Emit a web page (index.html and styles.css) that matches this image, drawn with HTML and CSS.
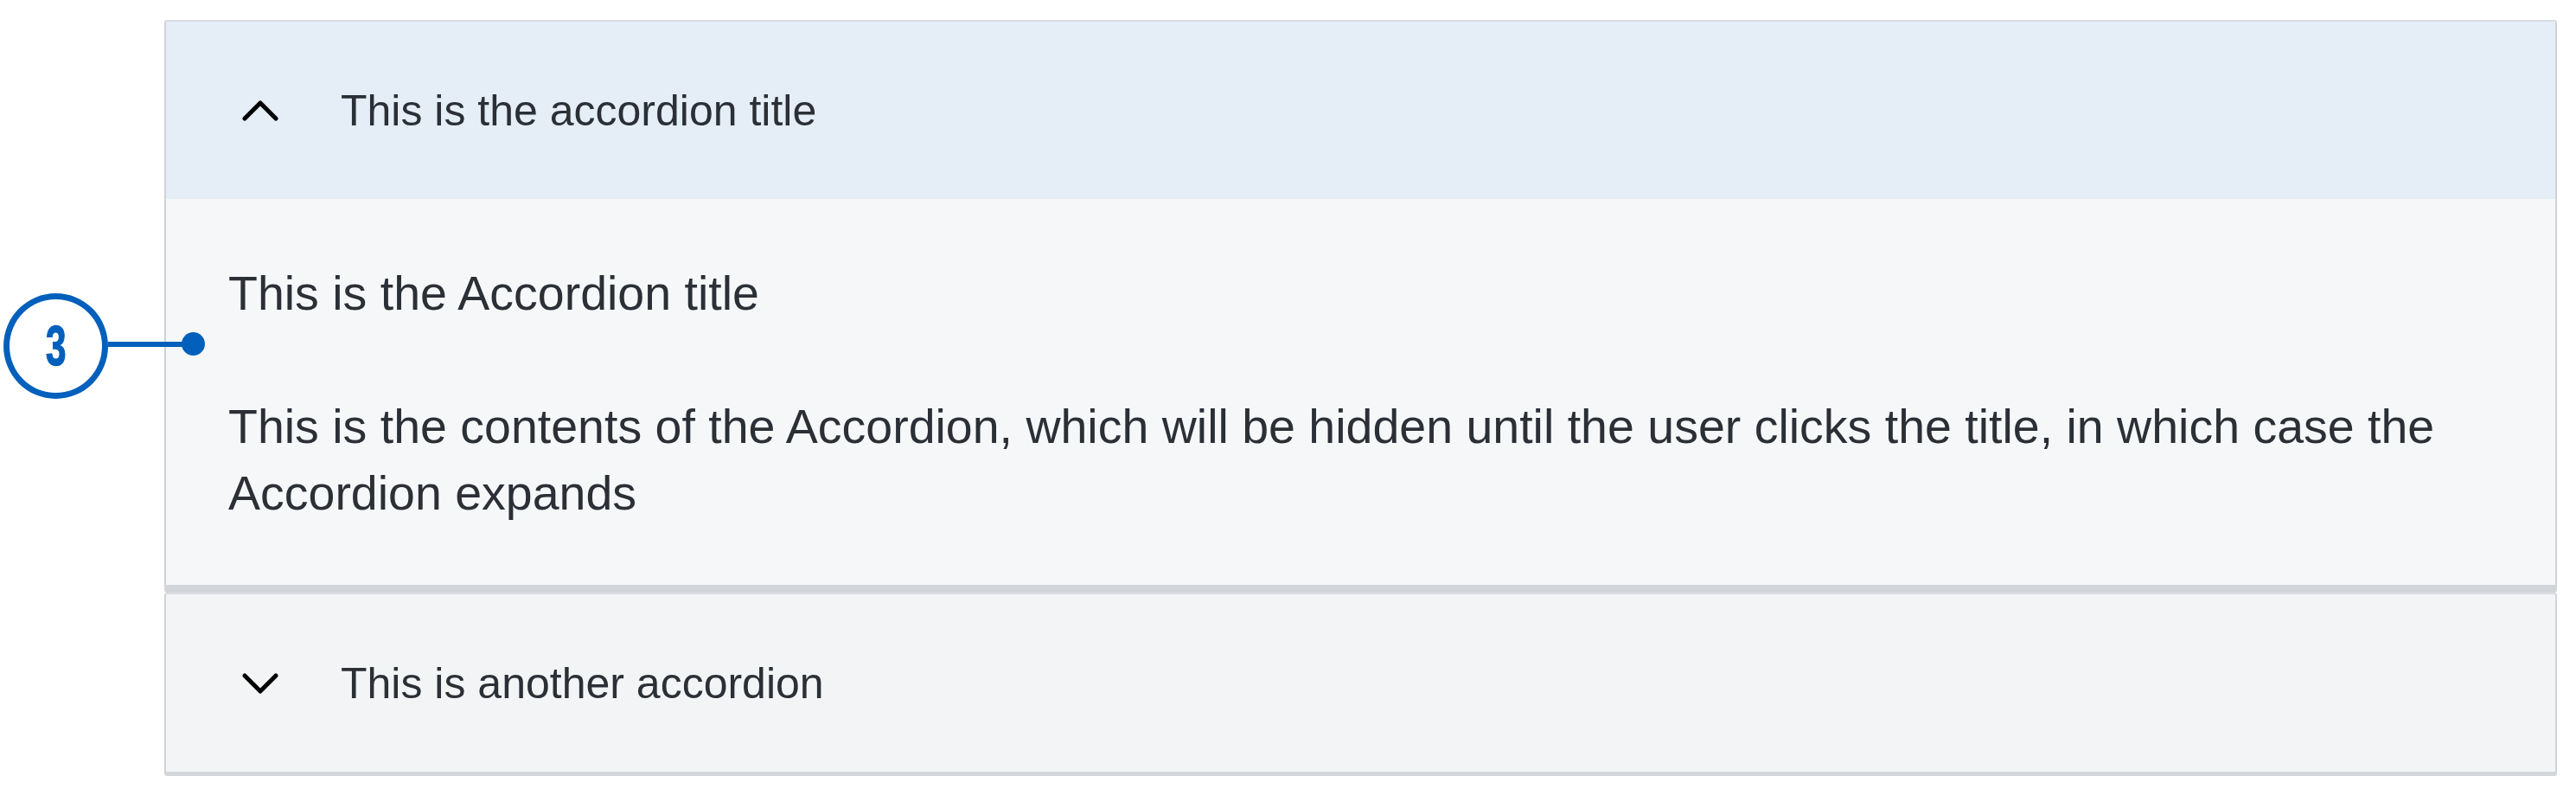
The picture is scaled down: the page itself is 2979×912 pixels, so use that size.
FILE: index.html
```html
<!doctype html>
<html>
<head>
    <meta charset="UTF-8">
    <link rel="stylesheet" href="styles.css">
</head>
<body>
<div class="page">
    <div class="accordion">
        <div class="acc-item is-open">
            <div class="acc-header">
                <svg class="acc-icon" width="42" height="24" viewBox="0 0 42 24">
                    <path d="M3 21 L21 3 L39 21"/>
                </svg>
                <span class="acc-title">This is the accordion title</span>
            </div>
            <div class="acc-content">
                <p>This is the Accordion title</p>
                <p>This is the contents of the Accordion, which will be hidden until the user clicks the title, in which case the Accordion expands</p>
            </div>
        </div>
        <div class="acc-item">
            <div class="acc-header">
                <svg class="acc-icon" width="42" height="24" viewBox="0 0 42 24">
                    <path d="M3 3 L21 21 L39 3"/>
                </svg>
                <span class="acc-title">This is another accordion</span>
            </div>
        </div>
    </div>

    <div class="callout">
        <div class="callout-num"><span>3</span></div>
        <div class="callout-line"></div>
        <div class="callout-dot"></div>
    </div>
</div>
</body>
</html>
```

FILE: styles.css
```css
body {
    margin: 0;
    background-color: #fff;
    font-family: "Liberation Sans", Arial, sans-serif;
    color: #2b2f36;
}

.page {
    position: relative;
    padding: 23px 0 0 190px;
}

.accordion {
    width: 2767px;
    display: flex;
    flex-direction: column;
}

.acc-item {
    box-sizing: border-box;
    border: 2px solid #cfd3d7;
    border-top-color: #d8dbdf;
    border-bottom: 5px solid #d3d6da;
    border-radius: 3px;
    background-color: #f3f4f6;
}

.acc-item.is-open {
    border-bottom: 9px solid #d1d5d9;
}

.acc-header {
    height: 205px;
    display: flex;
    align-items: center;
    padding-left: 88px;
    gap: 72px;
}

.is-open .acc-header {
    background-color: #e5edf7;
}

.acc-icon path {
    fill: none;
    stroke: #000;
    stroke-width: 5;
    stroke-linecap: round;
    stroke-linejoin: round;
}

.acc-title {
    font-size: 50px;
}

.acc-content {
    background-color: #f6f7f9;
    padding: 71px 72px 67px 72px;
    font-size: 55.5px;
    line-height: 77px;
}

.acc-content p {
    margin: 0 0 77px 0;
}

.acc-content p:last-child {
    margin-bottom: 0;
}

/* numbered marker over the content */
.callout {
    position: absolute;
    left: 4px;
    top: 339px;
    display: flex;
    align-items: center;
}

.callout-num {
    box-sizing: border-box;
    width: 121px;
    height: 122px;
    border: 7px solid #0060bb;
    border-radius: 50%;
    display: flex;
    align-items: center;
    justify-content: center;
    font-family: "Liberation Sans", Arial, sans-serif;
    font-weight: bold;
    font-size: 64px;
    line-height: 1;
    color: #0060bb;
    -webkit-text-stroke: 1.5px #0060bb;
}

.callout-num span {
    display: inline-block;
    transform: scale(0.66, 1);
}

.callout-line {
    width: 88px;
    height: 6px;
    background-color: #0060bb;
    margin-top: -5px;
}

.callout-dot {
    width: 27px;
    height: 27px;
    border-radius: 50%;
    background-color: #0060bb;
    margin-left: -3px;
    margin-top: -5px;
}
```
